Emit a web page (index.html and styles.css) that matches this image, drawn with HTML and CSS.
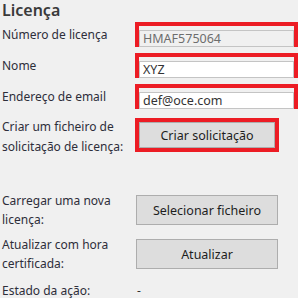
FILE: index.html
```html
<!DOCTYPE html>
<html lang="pt">
<head>
    <meta charset="UTF-8" />
    <meta name="viewport" content="width=device-width, initial-scale=1.0" />
    <title>Licença</title>
    <link rel="stylesheet" href="styles.css">
</head>
<body>
    <div class="license_panel">
        <h2 class="title">Licença</h2>

        <div class="row first">
            <label class="caption" for="number">Número de licença</label>
            <div class="marked">
                <input class="field locked" id="number" type="text" value="HMAF575064" readonly />
            </div>
        </div>

        <div class="row">
            <label class="caption" for="name">Nome</label>
            <div class="marked">
                <input class="field" id="name" type="text" value="XYZ" />
            </div>
        </div>

        <div class="row">
            <label class="caption" for="email">Endereço de email</label>
            <div class="marked">
                <input class="field" id="email" type="text" value="def@oce.com" />
            </div>
        </div>

        <div class="row request">
            <span class="caption">Criar um ficheiro de solicitação de licença:</span>
            <div class="marked button_mark">
                <button class="action">Criar solicitação</button>
            </div>
        </div>

        <div class="row upload">
            <span class="caption">Carregar uma nova licença:</span>
            <button class="action plain">Selecionar ficheiro</button>
        </div>

        <div class="row">
            <span class="caption">Atualizar com hora certificada:</span>
            <button class="action plain">Atualizar</button>
        </div>

        <div class="row status">
            <span class="caption">Estado da ação:</span>
            <span class="value">-</span>
        </div>
    </div>
</body>
</html>
```

FILE: styles.css
```css
/* Base */
* {
    margin: 0;
    padding: 0;
    box-sizing: border-box;
    font-family: "Noto Sans", "Open Sans", sans-serif;
}

body {
    width: 298px;
    height: 298px;
    overflow: hidden;
    background: #f0f0f0;
    color: #333333;
}

.license_panel {
    padding-left: 2px;
    padding-top: 1px;
}

.title {
    font-size: 16px;
    font-weight: 600;
    line-height: 18px;
    color: #3a3a3a;
}

/* Label + control rows */
.row {
    display: flex;
    align-items: center;
    margin-top: 6px;
}

.row.first {
    margin-top: 3px;
}

.caption {
    width: 133px;
    flex-shrink: 0;
    font-size: 12px;
    line-height: 19px;
    color: #2e2e3a;
}

/* Red highlight frame */
.marked {
    width: 163px;
    height: 25px;
    border: 4px solid #ec1c24;
}

.field {
    width: 100%;
    height: 100%;
    border: 1px solid #c4c4c4;
    background: #ffffff;
    outline: none;
    padding: 0 3px;
    font-size: 12.5px;
    color: #333333;
}

.field.locked {
    background: #f0f0f0;
    color: #6d6d6d;
}

/* Buttons */
.action {
    width: 100%;
    height: 100%;
    border: 1px solid #adadad;
    background: #dddddd;
    font-size: 12.5px;
    color: #1e1e1e;
    cursor: pointer;
}

.action.plain {
    width: 142px;
    height: 30px;
    margin-left: 1px;
}

.row.request {
    margin-top: 9px;
    align-items: flex-start;
}

.row.request .caption {
    line-height: 20px;
    margin-top: -1px;
}

.button_mark {
    width: 144px;
    height: 34px;
}

.row.upload {
    margin-top: 34px;
}

.row.status {
    margin-top: 8px;
}

.value {
    font-size: 12px;
    padding-left: 2px;
}
```
